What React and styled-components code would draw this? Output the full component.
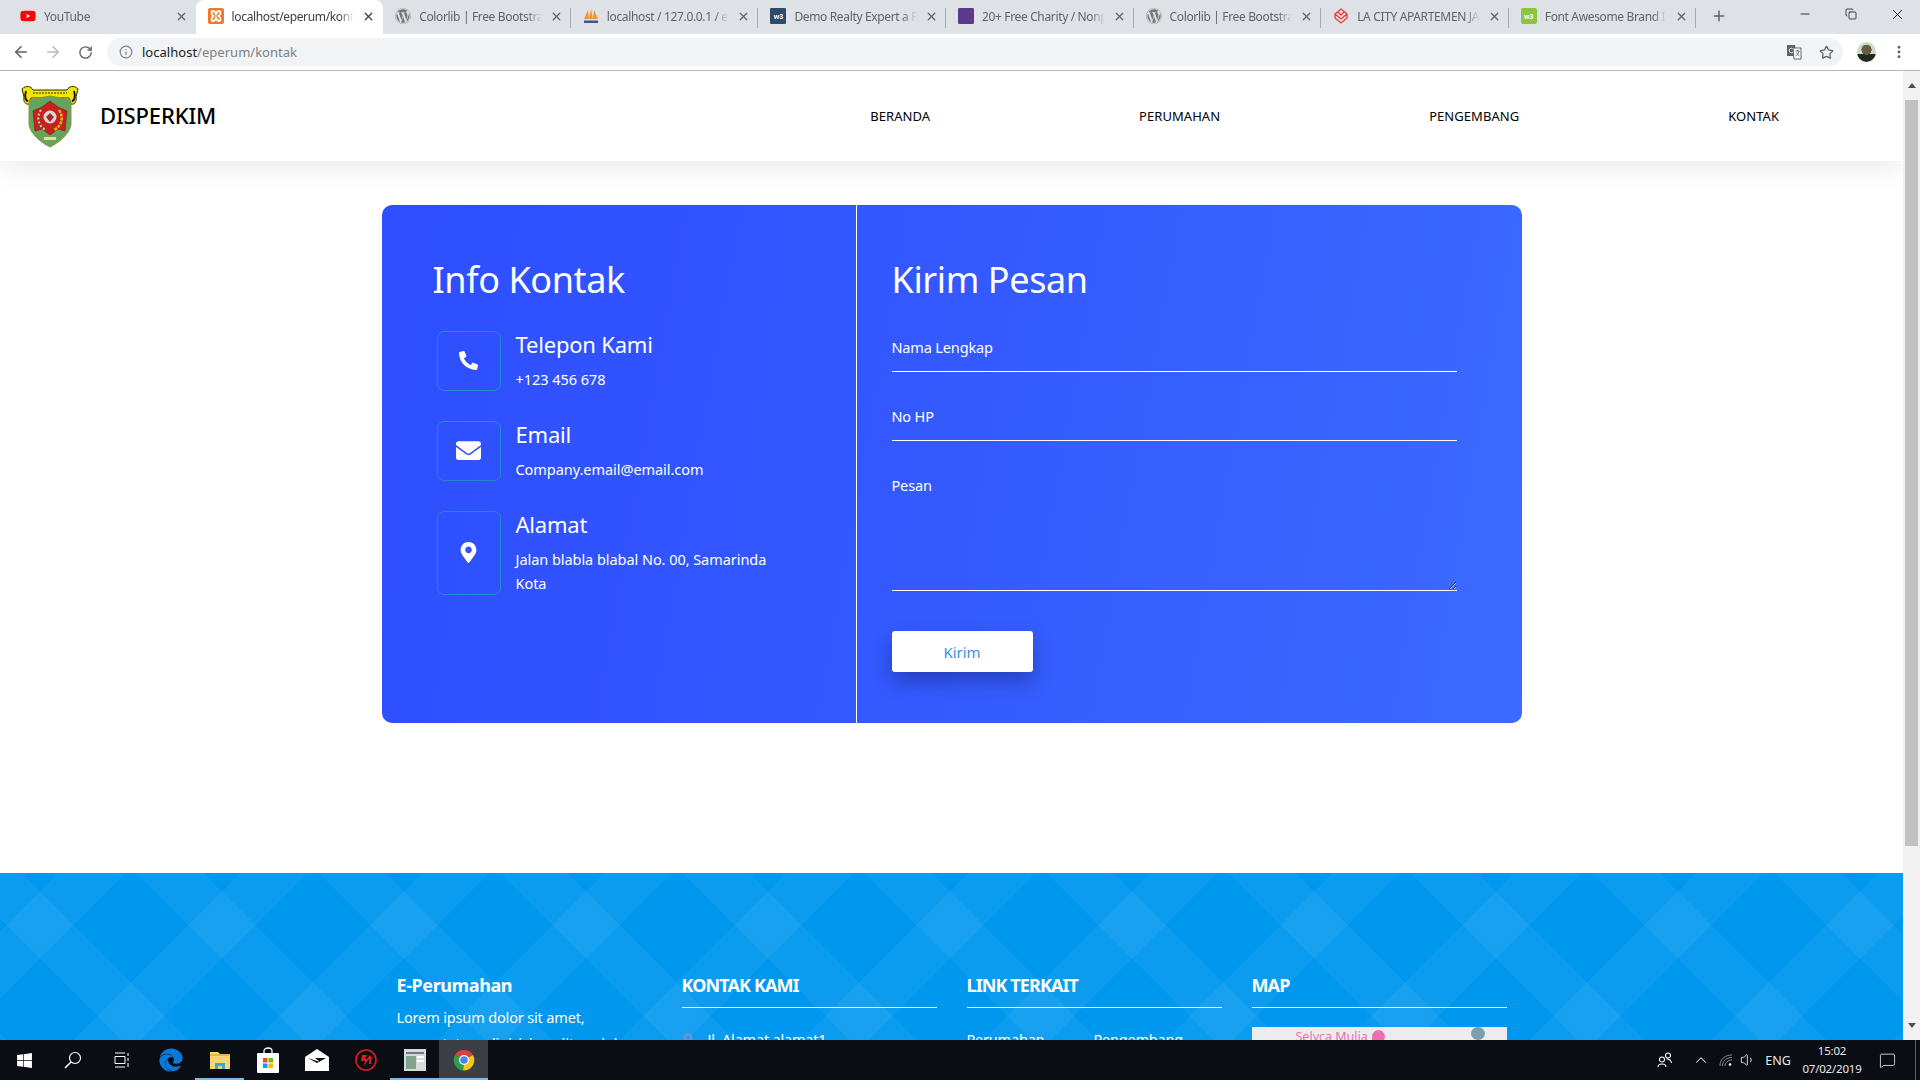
import React from "react";
import styled, { createGlobalStyle } from "styled-components";
import { FaWordpress, FaYoutube, FaPhoneAlt, FaEnvelope, FaMapMarkerAlt, FaWindows, FaEdge } from "react-icons/fa";
import { ArrowLeft, ArrowRight, RotateCw, Info, Star, X, Plus, Minus, Copy, EllipsisVertical, ChevronUp, Volume1, MessageSquare } from "lucide-react";

const GlobalStyle = createGlobalStyle`
  html, body { margin: 0; padding: 0; overflow: hidden; background: #fff; }
  * { box-sizing: border-box; }
  body { font-family: "Noto Sans", "Open Sans", sans-serif; }
  input::placeholder, textarea::placeholder { color: #fff; opacity: 1; }
`;

const Screen = styled.div`
  width: 1920px;
  height: 1080px;
  display: flex;
  flex-direction: column;
  overflow: hidden;
`;

/* browser chrome */
const TabStrip = styled.div`
  height: 34px;
  flex: none;
  background: #dee1e6;
  display: flex;
  align-items: stretch;
  padding-left: 8px;
`;

const TabItem = styled.div`
  width: 187.6px;
  flex: none;
  display: flex;
  align-items: center;
  gap: 8px;
  padding: 0 8px 2px 12px;
  font-size: 12px;
  color: ${(p) => (p.$active ? "#3c4043" : "#5f6368")};
  background: ${(p) => (p.$active ? "#fff" : "transparent")};
  border-radius: ${(p) => (p.$active ? "8px 8px 0 0" : "0")};
  position: relative;
  &::after {
    content: "";
    display: ${(p) => (p.$sep ? "block" : "none")};
    position: absolute;
    right: 0;
    top: 8px;
    bottom: 6px;
    width: 1px;
    background: #a6a9ad;
  }
`;

const TabTitle = styled.span`
  flex: 1;
  min-width: 0;
  overflow: hidden;
  white-space: nowrap;
  letter-spacing: -0.35px;
  mask-image: linear-gradient(90deg, #000 88%, transparent);
`;

const Fav = styled.span`
  width: 16px;
  height: 16px;
  flex: none;
  display: flex;
  align-items: center;
  justify-content: center;
`;

const NewTab = styled.div`
  width: 24px;
  margin-left: 11px;
  padding-bottom: 2px;
  display: flex;
  align-items: center;
  justify-content: center;
  color: #5f6368;
`;

const WindowButtons = styled.div`
  margin-left: auto;
  display: flex;
`;

const WinButton = styled.div`
  width: 46px;
  height: 28px;
  display: flex;
  align-items: center;
  justify-content: center;
  color: #000;
`;

const Toolbar = styled.div`
  height: 37px;
  flex: none;
  background: #fff;
  border-bottom: 1px solid #b5b5b5;
  display: flex;
  align-items: center;
  padding-left: 5px;
`;

const ToolButton = styled.div`
  width: ${(p) => p.$w || 32}px;
  height: 28px;
  flex: none;
  display: flex;
  align-items: center;
  justify-content: center;
  color: ${(p) => p.$color || "#5f6368"};
`;

const AddressBar = styled.div`
  width: 1736px;
  height: 28px;
  margin-left: 6px;
  flex: none;
  border-radius: 14px;
  background: #f1f3f4;
  display: flex;
  align-items: center;
  padding: 0 1px 0 12px;
  font-size: 13px;
  color: #7b8187;
`;

const Host = styled.span`
  color: #202124;
`;

const Url = styled.div`
  margin-left: 9px;
  flex: 1;
  letter-spacing: 0.02px;
`;

const Avatar = styled.span`
  width: 19px;
  height: 20px;
  border-radius: 50%;
  background: radial-gradient(circle at 50% 38%, #6b5a48 0 32%, transparent 33%),
    linear-gradient(180deg, #c9dcc6 0 58%, #1f2a22 59%);
`;

/* viewport and page */
const Viewport = styled.div`
  flex: 1;
  min-height: 0;
  display: flex;
`;

const Page = styled.div`
  flex: 1;
  min-width: 0;
  overflow: hidden;
  background: #fff;
`;

const Scrollbar = styled.div`
  width: 17px;
  flex: none;
  background: #f1f1f1;
  display: flex;
  flex-direction: column;
  align-items: center;
`;

const ScrollArrow = styled.div`
  height: 29px;
  flex: none;
  margin-top: ${(p) => (p.$down ? "auto" : "0")};
  display: flex;
  align-items: center;
  justify-content: center;
  &::before {
    content: "";
    border-left: 4px solid transparent;
    border-right: 4px solid transparent;
    ${(p) => (p.$down ? "border-top: 5px solid #505050;" : "border-bottom: 5px solid #505050;")}
  }
`;

const ScrollThumb = styled.div`
  width: 13px;
  height: 746px;
  background: #c1c1c1;
`;

const Navbar = styled.header`
  height: 90px;
  position: relative;
  background: #fff;
  box-shadow: 0 6px 26px rgba(0, 0, 0, 0.09);
  display: flex;
  align-items: center;
  padding: 0 124px 0 20px;
`;

const Brand = styled.div`
  display: flex;
  align-items: center;
  gap: 20px;
`;

const BrandName = styled.span`
  margin-bottom: 2px;
  font-size: 22px;
  font-weight: 500;
  color: #000;
  letter-spacing: -0.15px;
`;

const NavLinks = styled.nav`
  margin-left: auto;
  padding-bottom: 1px;
  display: flex;
  gap: 209px;
  font-size: 13px;
  letter-spacing: 0.05px;
  color: #000;
`;

const Card = styled.section`
  width: 1140px;
  height: 518px;
  margin: 44px auto 150px;
  border-radius: 10px;
  overflow: hidden;
  color: #fff;
  display: flex;
  background: linear-gradient(100deg, #2e4eff 0%, #3358ff 45%, #3c6aff 100%);
`;

const InfoPanel = styled.div`
  width: 475px;
  flex: none;
  padding: 51px 40px 0 51px;
  border-right: 1px solid #fff;
`;

const FormPanel = styled.form`
  flex: 1;
  padding: 51px 65px 0 35px;
  display: flex;
  flex-direction: column;
`;

const PanelTitle = styled.h2`
  margin: 0;
  font-size: 36px;
  font-weight: 400;
  line-height: 48px;
  letter-spacing: -0.4px;
`;

const InfoList = styled.div`
  margin: 27px 0 0 4px;
  display: flex;
  flex-direction: column;
  gap: 30px;
`;

const InfoRow = styled.div`
  display: flex;
  gap: 15px;
`;

const IconBox = styled.div`
  width: 64px;
  min-height: 60px;
  flex: none;
  border: 1px solid #1f8cc9;
  border-radius: 7px;
  padding-bottom: 1px;
  display: flex;
  align-items: center;
  justify-content: center;
  font-size: ${(p) => p.$size}px;
`;

const InfoTitle = styled.h3`
  margin: 0;
  font-size: 22px;
  font-weight: 400;
  line-height: 26px;
  letter-spacing: -0.2px;
`;

const InfoText = styled.p`
  margin: 10px 0 0;
  width: 270px;
  font-size: 14.5px;
  line-height: 24px;
  letter-spacing: -0.05px;
`;

const Field = styled.input`
  height: 46px;
  margin-top: ${(p) => p.$top}px;
  flex: none;
  border: 0;
  border-bottom: 1px solid #fff;
  background: transparent;
  padding: 0 0 3px;
  color: #fff;
  font: 14.5px "Noto Sans", sans-serif;
  letter-spacing: -0.15px;
  outline: none;
`;

const MessageField = styled.textarea`
  height: 127px;
  margin-top: 23px;
  flex: none;
  border: 0;
  border-bottom: 1px solid #fff;
  background: transparent;
  padding: 11px 0 0;
  color: #fff;
  font: 14.5px "Noto Sans", sans-serif;
  letter-spacing: -0.15px;
  outline: none;
`;

const SendButton = styled.button`
  width: 141px;
  height: 41px;
  margin-top: 40px;
  border: 0;
  border-radius: 3px;
  background: #fff;
  color: #3f8fdc;
  font: 15px "Noto Sans", sans-serif;
  box-shadow: 0 10px 20px rgba(0, 0, 30, 0.28);
`;

const Footer = styled.footer`
  height: 400px;
  background-color: #0097ee;
  background-image: repeating-linear-gradient(45deg, rgba(255, 255, 255, 0.048) 0 40.5px, transparent 40.5px 122.2px, rgba(255, 255, 255, 0.048) 122.2px 128.7px),
    repeating-linear-gradient(-45deg, rgba(255, 255, 255, 0.048) 0 42.6px, transparent 42.6px 124.3px, rgba(255, 255, 255, 0.048) 124.3px 128.7px);
  color: #fff;
`;

const FooterGrid = styled.div`
  width: 1140px;
  margin: 0 auto;
  padding: 99px 15px 0;
  display: grid;
  grid-template-columns: repeat(4, 1fr);
  gap: 30px;
`;

const FooterTitle = styled.h4`
  margin: 0;
  height: ${(p) => (p.$plain ? "auto" : "36px")};
  font-size: 18px;
  font-weight: 700;
  line-height: 26px;
  letter-spacing: ${(p) => (p.$plain ? "-0.4px" : "-0.9px")};
  border-bottom: ${(p) => (p.$plain ? "0" : "1px solid #fff")};
`;

const FooterText = styled.p`
  margin: 6px 0 0;
  font-size: 14.5px;
  line-height: 26px;
  letter-spacing: -0.15px;
`;

const ContactRow = styled.div`
  margin-top: 21px;
  display: flex;
  align-items: center;
  gap: 14px;
  font-size: 14.5px;
  line-height: 20px;
  letter-spacing: -0.2px;
  svg { color: #6f8fe0; }
`;

const LinkColumns = styled.div`
  margin-top: 21px;
  display: grid;
  grid-template-columns: 127px 1fr;
  font-size: 14.5px;
  line-height: 20px;
  letter-spacing: -0.2px;
`;

const MapBox = styled.div`
  height: 150px;
  margin-top: 19px;
  background: #ececec;
  position: relative;
  padding: 3px 0 0 44px;
  display: flex;
  align-items: flex-start;
  gap: 4px;
  font-size: 12.5px;
  line-height: 14px;
  color: #ee6fb0;
  overflow: hidden;
`;

const MapPin = styled.span`
  width: 13px;
  height: 13px;
  border-radius: 50% 50% 50% 2px;
  background: #ee6fb0;
`;

const MapPoi = styled.span`
  position: absolute;
  top: 0;
  right: 22px;
  width: 14px;
  height: 13px;
  border-radius: 50%;
  background: #7c9fb0;
`;

/* windows taskbar */
const Taskbar = styled.div`
  height: 40px;
  flex: none;
  background: #0a0d14;
  color: #fff;
  display: flex;
  align-items: stretch;
`;

const TaskSlot = styled.div`
  width: 48.8px;
  flex: none;
  display: flex;
  align-items: center;
  justify-content: center;
  background: ${(p) => (p.$current ? "#3b3e43" : "transparent")};
  border-bottom: 2px solid ${(p) => (p.$open ? "#76b9ed" : "transparent")};
  border-top: 2px solid transparent;
`;

const Tray = styled.div`
  margin-left: auto;
  display: flex;
  align-items: center;
  font-size: 12.5px;
  color: #e8e8e8;
`;

const TrayIcon = styled.span`
  display: flex;
  justify-content: center;
  width: ${(p) => p.$w}px;
`;

const Clock = styled.div`
  width: 68px;
  text-align: center;
  font-size: 11.5px;
  line-height: 18px;
  letter-spacing: -0.2px;
`;

const DesktopEdge = styled.span`
  align-self: stretch;
  width: 1px;
  margin: 0 4px 0 7px;
  background: #5a5d62;
`;

const Logo = () => (
  <svg width="60" height="63" viewBox="0 0 60 63">
    <path d="M2 4 C6 0 11 1 13 5 L47 5 C49 1 54 0 58 4 L56 12 C57 17 54 20 51 19 L49 13 L11 13 L9 19 C6 20 3 17 4 12Z" fill="#f2e600" stroke="#2b2b12" strokeWidth="1" />
    <path d="M6 6 C4 12 6 16 8 16 M54 6 C56 12 54 16 52 16" fill="none" stroke="#111" strokeWidth="1.8" />
    <path d="M13 8 H47" stroke="#6a6a1a" strokeWidth="1.6" strokeDasharray="2 1" />
    <path d="M9 15 L30 11 L51 15 L51 40 C49 50 38 58 30 62 C22 58 11 50 9 40Z" fill="#63a55c" stroke="#9a8f3a" strokeWidth="1" />
    <path d="M13 26 L22 22 L30 16 L38 22 L47 26 L45 46 L38 44 L30 50 L22 44 L15 46Z" fill="#c81f1f" stroke="#7d1414" strokeWidth="0.6" />
    <circle cx="30" cy="32" r="6.5" fill="#d9d9d9" />
    <path d="M26 32 L30 28 L34 32 L30 37Z" fill="#a52a2a" />
    <path d="M21 25 C16 32 18 41 26 45" fill="none" stroke="#9fe0a8" strokeWidth="2.2" strokeDasharray="2 2" />
    <path d="M39 25 C44 32 42 41 34 45" fill="none" stroke="#d9b21c" strokeWidth="2.6" strokeDasharray="3 1" />
    <rect x="24" y="52" width="12" height="3" fill="#e6e0a0" />
  </svg>
);

const Square = styled.span`
  width: 16px;
  height: 16px;
  border-radius: ${(p) => p.$r || 1}px;
  background: ${(p) => p.$bg};
  color: #fff;
  font: 700 7px "Liberation Sans", sans-serif;
  display: flex;
  align-items: center;
  justify-content: center;
`;

const XamppIcon = () => (
  <svg width="16" height="16" viewBox="0 0 16 16">
    <rect width="16" height="16" rx="2" fill="#ef7b2a" />
    <path d="M5 3 C3 3 3 6 5.5 8 C3 10 3 13 5 13 C7 13 8 10 8 10 C8 10 9 13 11 13 C13 13 13 10 10.5 8 C13 6 13 3 11 3 C9 3 8 6 8 6 C8 6 7 3 5 3Z" fill="none" stroke="#fff" strokeWidth="1.8" />
  </svg>
);

const PmaIcon = () => (
  <svg width="16" height="16" viewBox="0 0 16 16">
    <path d="M1 11 L5 2 L6 11Z M6 11 L8 1 L10 11Z M10 11 L11 2 L15 11Z" fill="#f0962a" />
    <rect x="1" y="12.5" width="14" height="2.5" fill="#3d5a8a" />
  </svg>
);

const CityIcon = () => (
  <svg width="16" height="16" viewBox="0 0 16 16" fill="none" stroke="#e8392f" strokeWidth="1.3">
    <path d="M8 1 L14 6 L8 11 L2 6Z M2 6 V10 L8 15 L14 10 V6 M5 4 L8 7 L11 4" />
  </svg>
);

const TranslateIcon = () => (
  <svg width="16" height="16" viewBox="0 0 16 16">
    <path d="M1 1 H9 L11 12 H1Z" fill="#5f6368" />
    <circle cx="5.5" cy="6.5" r="2.3" fill="none" stroke="#fff" strokeWidth="1" />
    <path d="M7 4 H15 V15 H8Z" fill="#fff" stroke="#5f6368" strokeWidth="1" />
    <path d="M9.5 7 H13.5 M11.5 6 V7 M13 7 C12.5 10 11 11.5 9.5 12 M10.5 8.5 C11 10 12.5 11.5 13.5 12" fill="none" stroke="#5f6368" strokeWidth="0.9" />
  </svg>
);

const tabs = [
  { title: "YouTube", icon: <FaYoutube size={16} color="#f00" /> },
  { title: "localhost/eperum/kontak", icon: <XamppIcon />, active: true },
  { title: "Colorlib | Free Bootstrap Templates", icon: <FaWordpress size={16} color="#777" />, sep: true },
  { title: "localhost / 127.0.0.1 / eperum", icon: <PmaIcon />, sep: true },
  { title: "Demo Realty Expert a Real", icon: <Square $bg="#2f4a68">w3</Square>, sep: true },
  { title: "20+ Free Charity / Nonprofit", icon: <Square $bg="#5b3a8c" />, sep: true },
  { title: "Colorlib | Free Bootstrap Templates", icon: <FaWordpress size={16} color="#777" />, sep: true },
  { title: "LA CITY APARTEMEN JAKARTA", icon: <CityIcon />, sep: true },
  { title: "Font Awesome Brand Icons", icon: <Square $bg="#8cc63f" $r={2}>w3</Square>, sep: true },
];

const Explorer = () => (
  <svg width="22" height="22" viewBox="0 0 22 22">
    <path d="M1 3 H9 L11 5 H21 V20 H1Z" fill="#f9d671" />
    <rect x="1" y="5" width="20" height="2" fill="#e8b93f" />
    <path d="M6 20 V14 H16 V20 H13 V17 H9 V20Z" fill="#3aa7e0" />
  </svg>
);

const Store = () => (
  <svg width="22" height="26" viewBox="0 0 22 26">
    <path d="M7 7 V4 C7 0 15 0 15 4 V7" fill="none" stroke="#fff" strokeWidth="1.3" />
    <rect x="0" y="6" width="22" height="20" rx="1" fill="#fff" />
    <rect x="6" y="11" width="4.5" height="4.5" fill="#e8502a" />
    <rect x="11.5" y="11" width="4.5" height="4.5" fill="#7fba00" />
    <rect x="6" y="16.5" width="4.5" height="4.5" fill="#00a4ef" />
    <rect x="11.5" y="16.5" width="4.5" height="4.5" fill="#ffb900" />
  </svg>
);

const Mail = () => (
  <svg width="24" height="22" viewBox="0 0 24 22">
    <path d="M0 8 L12 0 L24 8 V22 H0Z" fill="#fff" />
    <path d="M3 9 L12 14 L21 9 L10 9 L15 13" fill="#0a0d14" />
  </svg>
);

const RedBadge = () => (
  <svg width="22" height="22" viewBox="0 0 22 22">
    <circle cx="11" cy="11" r="10" fill="none" stroke="#d81e1e" strokeWidth="1.6" />
    <path d="M7 6 H12 L10 10 H14 L9 17 L10 12 H6Z M15 6 L18 10 H16 V15 H14 V10 H12Z" fill="#d81e1e" />
  </svg>
);

const AppWindow = () => (
  <svg width="22" height="22" viewBox="0 0 22 22">
    <rect width="22" height="22" fill="#d8dcd8" />
    <rect x="2" y="3" width="18" height="2" fill="#6a7a80" />
    <rect x="2" y="7" width="10" height="13" fill="#7fa38c" />
    <rect x="13" y="7" width="7" height="2" fill="#fff" />
    <rect x="13" y="11" width="7" height="2" fill="#fff" />
  </svg>
);

const Chrome = () => (
  <svg width="22" height="22" viewBox="0 0 22 22">
    <path d="M11 11 L2 6 A10.5 10.5 0 0 1 20 6Z" fill="#dc4535" />
    <path d="M11 11 L20 6 A10.5 10.5 0 0 1 10 21.5Z" fill="#f5c518" />
    <path d="M11 11 L10 21.5 A10.5 10.5 0 0 1 2 6Z" fill="#2f9e4f" />
    <circle cx="11" cy="11" r="5" fill="#fff" />
    <circle cx="11" cy="11" r="3.8" fill="#4285f4" />
  </svg>
);

const SearchGlass = () => (
  <svg width="18" height="18" viewBox="0 0 18 18" fill="none" stroke="#fff" strokeWidth="1.2">
    <circle cx="11" cy="7" r="5.5" />
    <path d="M7 11 L1 17" strokeWidth="1.6" />
  </svg>
);

const TaskView = () => (
  <svg width="16" height="16" viewBox="0 0 16 16" fill="none" stroke="#fff" strokeWidth="1">
    <path d="M1 1 H11 M1 15 H11 M1 4.5 H11 V11.5 H1Z M14 1 V4 M14 6 V9 M14 11 V15" />
  </svg>
);

const People = () => (
  <svg width="16" height="16" viewBox="0 0 16 16" fill="none" stroke="#fff" strokeWidth="1.1">
    <circle cx="5" cy="7.5" r="2.5" />
    <path d="M1 15 C1 11 9 11 9 15" />
    <circle cx="11" cy="3.5" r="2.5" />
    <path d="M9.5 7 C12 7 14 8 14.5 11" />
  </svg>
);

const WifiDim = () => (
  <svg width="14" height="14" viewBox="0 0 14 14" fill="none" stroke="#8a8a8a" strokeWidth="1">
    <path d="M1 13 C1 6 6 2 13 2 M3.5 13 C3.5 8 7.5 4.5 13 4.5 M6 13 C6 10 9 7 13 7" />
    <circle cx="11" cy="11.5" r="1.3" fill="#fff" stroke="none" />
  </svg>
);

const App = () => {
  return (
    <Screen>
      <GlobalStyle />
      <TabStrip>
        {tabs.map((t) => (
          <TabItem key={t.title + t.sep} $active={t.active} $sep={t.sep}>
            <Fav>{t.icon}</Fav>
            <TabTitle>{t.title}</TabTitle>
            <X size={13} strokeWidth={2.4} />
          </TabItem>
        ))}
        <NewTab><Plus size={16} strokeWidth={2.2} /></NewTab>
        <WindowButtons>
          <WinButton><Minus size={14} strokeWidth={1.3} /></WinButton>
          <WinButton><Copy size={12} strokeWidth={1.4} /></WinButton>
          <WinButton><X size={17} strokeWidth={1.2} /></WinButton>
        </WindowButtons>
      </TabStrip>

      <Toolbar>
        <ToolButton><ArrowLeft size={18} strokeWidth={2.2} /></ToolButton>
        <ToolButton $color="#b9bcc0"><ArrowRight size={18} strokeWidth={2.2} /></ToolButton>
        <ToolButton><RotateCw size={15} strokeWidth={2.2} /></ToolButton>
        <AddressBar>
          <Info size={14} />
          <Url><Host>localhost</Host>/eperum/kontak</Url>
          <ToolButton><TranslateIcon /></ToolButton>
          <ToolButton><Star size={15} /></ToolButton>
        </AddressBar>
        <ToolButton $w={46}><Avatar /></ToolButton>
        <ToolButton $w={20}><EllipsisVertical size={16} strokeWidth={2.4} /></ToolButton>
      </Toolbar>

      <Viewport>
        <Page>
          <Navbar>
            <Brand>
              <Logo />
              <BrandName>DISPERKIM</BrandName>
            </Brand>
            <NavLinks>
              <span>BERANDA</span>
              <span>PERUMAHAN</span>
              <span>PENGEMBANG</span>
              <span>KONTAK</span>
            </NavLinks>
          </Navbar>

          <Card>
            <InfoPanel>
              <PanelTitle>Info Kontak</PanelTitle>
              <InfoList>
                <InfoRow>
                  <IconBox $size={19}><FaPhoneAlt /></IconBox>
                  <div>
                    <InfoTitle>Telepon Kami</InfoTitle>
                    <InfoText>+123 456 678</InfoText>
                  </div>
                </InfoRow>
                <InfoRow>
                  <IconBox $size={25}><FaEnvelope /></IconBox>
                  <div>
                    <InfoTitle>Email</InfoTitle>
                    <InfoText>Company.email@email.com</InfoText>
                  </div>
                </InfoRow>
                <InfoRow>
                  <IconBox $size={21}><FaMapMarkerAlt /></IconBox>
                  <div>
                    <InfoTitle>Alamat</InfoTitle>
                    <InfoText>Jalan blabla blabal No. 00, Samarinda Kota</InfoText>
                  </div>
                </InfoRow>
              </InfoList>
            </InfoPanel>

            <FormPanel>
              <PanelTitle>Kirim Pesan</PanelTitle>
              <Field $top={22} placeholder="Nama Lengkap" />
              <Field $top={23} placeholder="No HP" />
              <MessageField placeholder="Pesan" />
              <SendButton type="button">Kirim</SendButton>
            </FormPanel>
          </Card>

          <Footer>
            <FooterGrid>
              <div>
                <FooterTitle $plain>E-Perumahan</FooterTitle>
                <FooterText>Lorem ipsum dolor sit amet, consectetur adipisicing elit, sed do</FooterText>
              </div>
              <div>
                <FooterTitle>KONTAK KAMI</FooterTitle>
                <ContactRow><FaMapMarkerAlt size={12} />Jl. Alamat alamat1</ContactRow>
              </div>
              <div>
                <FooterTitle>LINK TERKAIT</FooterTitle>
                <LinkColumns>
                  <span>Perumahan</span>
                  <span>Pengembang</span>
                </LinkColumns>
              </div>
              <div>
                <FooterTitle>MAP</FooterTitle>
                <MapBox>
                  Selvca Mulia
                  <MapPin />
                  <MapPoi />
                </MapBox>
              </div>
            </FooterGrid>
          </Footer>
        </Page>
        <Scrollbar>
          <ScrollArrow />
          <ScrollThumb />
          <ScrollArrow $down />
        </Scrollbar>
      </Viewport>

      <Taskbar>
        <TaskSlot><FaWindows size={17} /></TaskSlot>
        <TaskSlot><SearchGlass /></TaskSlot>
        <TaskSlot><TaskView /></TaskSlot>
        <TaskSlot><FaEdge size={24} color="#0a78d6" /></TaskSlot>
        <TaskSlot $open><Explorer /></TaskSlot>
        <TaskSlot><Store /></TaskSlot>
        <TaskSlot><Mail /></TaskSlot>
        <TaskSlot><RedBadge /></TaskSlot>
        <TaskSlot $open><AppWindow /></TaskSlot>
        <TaskSlot $open $current><Chrome /></TaskSlot>
        <Tray>
          <TrayIcon $w={46}><People /></TrayIcon>
          <TrayIcon $w={26}><ChevronUp size={18} strokeWidth={1.4} /></TrayIcon>
          <TrayIcon $w={24}><WifiDim /></TrayIcon>
          <TrayIcon $w={20}><Volume1 size={16} strokeWidth={1.4} /></TrayIcon>
          <TrayIcon $w={40}>ENG</TrayIcon>
          <Clock>15:02<br />07/02/2019</Clock>
          <TrayIcon $w={42}><MessageSquare size={17} strokeWidth={1.2} /></TrayIcon>
          <DesktopEdge />
        </Tray>
      </Taskbar>
    </Screen>
  );
};

export default App;
